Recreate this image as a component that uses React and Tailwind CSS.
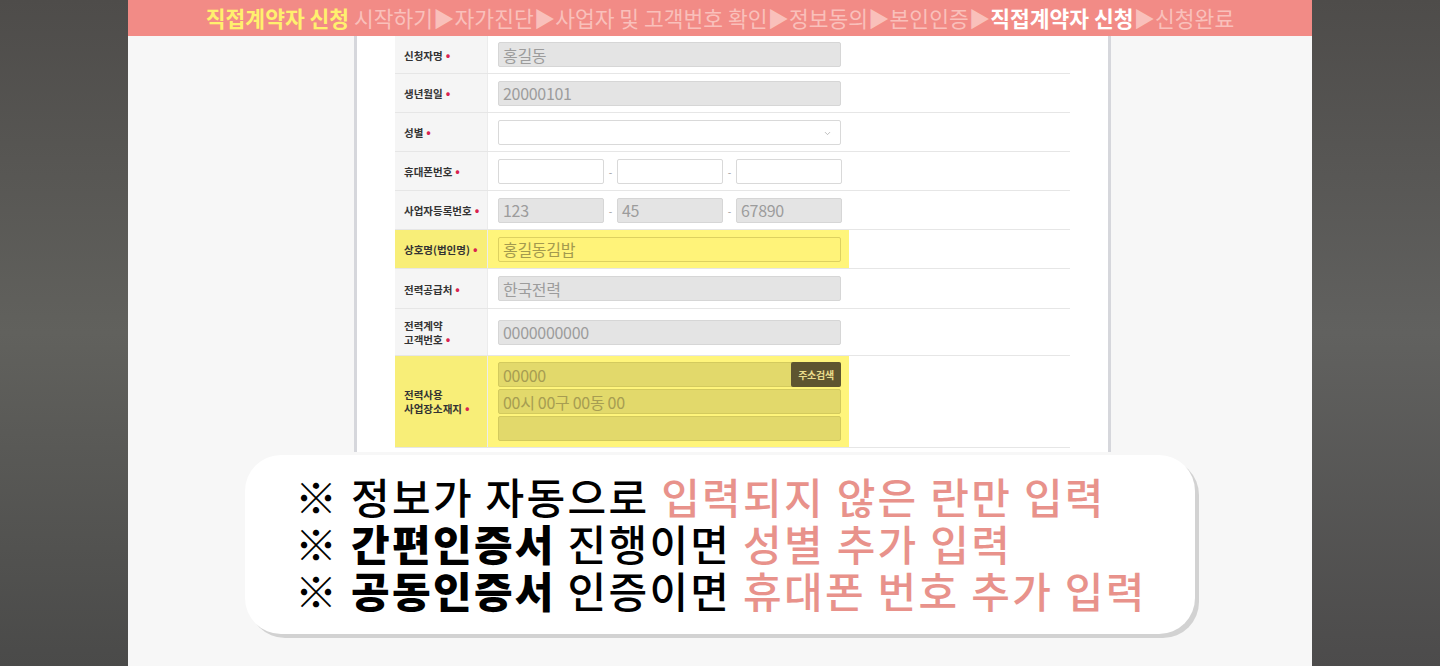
import { ChevronDown } from 'lucide-react';

const font = { fontFamily: '"Noto Sans CJK KR", "Noto Sans", sans-serif' };

function Dot() {
  return <span className="ml-[3px] text-[12px] text-[#d9234f]">•</span>;
}

function Label({ lines, yellow }) {
  return (
    <div className={`w-[93px] shrink-0 flex items-center pl-[9px] text-[10.5px] font-bold leading-[13px] text-[#333] border-r border-[#ececec] ${yellow ? 'bg-[#f8ee78]' : 'bg-[#f5f5f5]'}`}>
      <div>
        {lines.map((l, i) => (
          <div key={i}>
            {l}
            {i === lines.length - 1 && <Dot />}
          </div>
        ))}
      </div>
    </div>
  );
}

function Box({ value, tone = 'gray', w = 'w-[343px]', children }) {
  const tones = {
    gray: 'bg-[#e4e4e4] border-[#d6d6d6] text-[#9c9c9c]',
    white: 'bg-white border-[#d9d9d9] text-[#9c9c9c]',
    yellow: 'bg-[#fff379] border-[#ddd160] text-[#a39a4e]',
    dark: 'bg-[#e2d96b] border-[#d3ca5e] text-[#a79d52]',
  };
  return (
    <div className={`${w} h-[25px] rounded-[2px] border flex items-center px-[4px] text-[16px] tracking-[-0.3px] relative ${tones[tone]}`}>
      {value}
      {children}
    </div>
  );
}

function Triple({ values, tone }) {
  return (
    <div className="flex items-center">
      <Box value={values[0]} tone={tone} w="w-[106px]" />
      <span className="w-[13px] text-center text-[10px] text-[#999]">-</span>
      <Box value={values[1]} tone={tone} w="w-[106px]" />
      <span className="w-[13px] text-center text-[10px] text-[#999]">-</span>
      <Box value={values[2]} tone={tone} w="w-[106px]" />
    </div>
  );
}

function Row({ h, label, yellow, children }) {
  return (
    <div className={`flex border-b border-[#e6e6e6] ${h}`}>
      <Label lines={label} yellow={yellow} />
      <div className={`w-[361px] shrink-0 flex flex-col justify-center pl-[10px] ${yellow ? 'bg-[#fff57b]' : ''}`}>
        {children}
      </div>
      <div className="flex-1" />
    </div>
  );
}

export default function App() {
  return (
    <div className="flex h-[666px] w-[1440px] overflow-hidden" style={font}>
      <div className="w-[128px] shrink-0 bg-gradient-to-b from-[#4e4c4a] via-[#61615d] to-[#4a4a49]" />
      <div className="w-[1184px] shrink-0 flex flex-col bg-[#f7f7f7]">
        <div className="h-[36px] shrink-0 bg-[#f28b86] flex items-center justify-center text-[21.5px] leading-none tracking-[0px] whitespace-nowrap">
          <span className="font-bold text-[#fff06e]">직접계약자 신청</span>
          <span className="text-[#f9c0bb]">&nbsp;시작하기▶자가진단▶사업자 및 고객번호 확인▶정보동의▶본인인증▶</span>
          <span className="font-bold text-white">직접계약자 신청</span>
          <span className="text-[#f9c0bb]">▶신청완료</span>
        </div>

        <div className="ml-[229px] w-[751px] bg-white px-[38px] pb-[4px] shadow-[-3px_0_0_#d6d7dc,3px_0_0_#d6d7dc]">
          <Row h="h-[38px]" label={['신청자명']}>
            <Box value="홍길동" />
          </Row>
          <Row h="h-[39px]" label={['생년월일']}>
            <Box value="20000101" />
          </Row>
          <Row h="h-[39px]" label={['성별']}>
            <Box tone="white">
              <ChevronDown className="absolute right-[8px] top-[8px] w-[9px] h-[9px] text-[#aaa]" />
            </Box>
          </Row>
          <Row h="h-[39px]" label={['휴대폰번호']}>
            <Triple values={['', '', '']} tone="white" />
          </Row>
          <Row h="h-[39px]" label={['사업자등록번호']}>
            <Triple values={['123', '45', '67890']} tone="gray" />
          </Row>
          <Row h="h-[39px]" label={['상호명(법인명)']} yellow>
            <Box value="홍길동김밥" tone="yellow" />
          </Row>
          <Row h="h-[40px]" label={['전력공급처']}>
            <Box value="한국전력" />
          </Row>
          <Row h="h-[47px]" label={['전력계약', '고객번호']}>
            <Box value="0000000000" />
          </Row>
          <Row h="h-[92px]" label={['전력사용', '사업장소재지']} yellow>
            <div className="flex flex-col gap-[2px]">
              <Box value="00000" tone="dark">
                <div className="absolute right-[-1px] top-[-1px] h-[25px] w-[50px] rounded-[2px] bg-[#5e5530] text-[#eadc8c] text-[10px] font-bold flex items-center justify-center">
                  주소검색
                </div>
              </Box>
              <Box value="00시 00구 00동 00" tone="dark" />
              <Box value="" tone="dark" />
            </div>
          </Row>
        </div>

        <div className="ml-[117px] mt-[3px] w-[950px] h-[179px] rounded-[36px] bg-white shadow-[4px_4px_0_#d2d2d2] pl-[50px] pt-[17px] text-[42px] leading-[47px] tracking-[2.3px] font-medium text-black whitespace-nowrap">
          <div>
            ※ 정보가 자동으로 <span className="text-[#e8928b]">입력되지 않은 란만 입력</span>
          </div>
          <div>
            ※ <span className="font-black">간편인증서</span> 진행이면 <span className="text-[#e8928b]">성별 추가 입력</span>
          </div>
          <div>
            ※ <span className="font-black">공동인증서</span> 인증이면 <span className="text-[#e8928b]">휴대폰 번호 추가 입력</span>
          </div>
        </div>
      </div>
      <div className="flex-1 bg-gradient-to-b from-[#4e4c4a] via-[#61615f] to-[#4c4b4b]" />
    </div>
  );
}
